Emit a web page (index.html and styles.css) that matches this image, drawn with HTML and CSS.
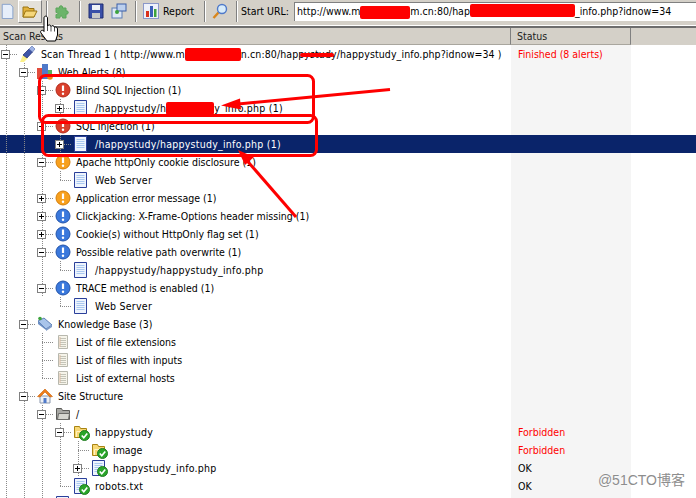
FILE: index.html
```html
<!DOCTYPE html>
<html lang="en">
<head>
  <meta charset="UTF-8" />
  <title>Acunetix Scan Results</title>
  <link rel="stylesheet" href="styles.css">
</head>
<body>
  <svg class="defs" width="0" height="0">
    <symbol id="i-minus" viewBox="0 0 9 9"><rect x=".5" y=".5" width="8" height="8" fill="#fff" stroke="#808080"/><path d="M2 4.500h5" stroke="#000"/></symbol>
    <symbol id="i-plus" viewBox="0 0 9 9"><rect x=".5" y=".5" width="8" height="8" fill="#fff" stroke="#808080"/><path d="M2 4.500h5M4.500 2v5" stroke="#000"/></symbol>
    <symbol id="i-doc" viewBox="0 0 16 16"><path d="M1.500 .5h12v15h-12z" fill="#eef4fd" stroke="#2a3f9a"/><path d="M3.500 3.500h8M3.500 5.500h8M3.500 7.500h8M3.500 9.500h8M3.500 11.500h8" stroke="#a9c8f0"/></symbol>
    <symbol id="i-leaf" viewBox="0 0 16 16"><path d="M3.500 1.500h9v13h-9z" fill="#f6f4ea" stroke="#b8b8ae"/><path d="M5 4.500h6M5 6.500h6M5 8.500h6M5 10.500h6M5 12.500h6" stroke="#c4c4b8"/><path d="M5 3v10" stroke="#d8b8a0"/></symbol>
    <symbol id="i-red" viewBox="0 0 16 16"><circle cx="8" cy="8" r="7" fill="#d9402c" stroke="#b42a1a"/><path d="M8 3.500v5.500" stroke="#fff" stroke-width="2.200"/><circle cx="8" cy="11.800" r="1.200" fill="#fff"/></symbol>
    <symbol id="i-orange" viewBox="0 0 16 16"><circle cx="8" cy="8" r="7" fill="#f7a01e" stroke="#d67f0a"/><path d="M8 3.500v5.500" stroke="#fff" stroke-width="2.200"/><circle cx="8" cy="11.800" r="1.200" fill="#fff"/></symbol>
    <symbol id="i-blue" viewBox="0 0 16 16"><circle cx="8" cy="8" r="7" fill="#3a78dc" stroke="#2354aa"/><path d="M8 3.500v5.500" stroke="#fff" stroke-width="2.200"/><circle cx="8" cy="11.800" r="1.200" fill="#fff"/></symbol>
    <symbol id="i-check" viewBox="0 0 12 12"><circle cx="6" cy="6" r="5.500" fill="#2aa52a" stroke="#1d7a1d"/><path d="M3 6l2.200 2.400L9 3.800" fill="none" stroke="#fff" stroke-width="1.800"/></symbol>
    <symbol id="i-folder" viewBox="0 0 16 16"><path d="M1.500 13.500v-11h5l1 2h6v9z" fill="#f7d774" stroke="#a98412"/><path d="M3.500 13V7.500h10" fill="none" stroke="#fff3c0"/></symbol>
    <symbol id="i-thread" viewBox="0 0 16 16"><path d="M1 16l3-7 5 3-4 4z" fill="#fbf08a"/><path d="M4 9l6-6 3.500 3-5.500 6z" fill="#3f56a8" stroke="#1f2c70" stroke-width=".7"/><path d="M10 3l3-3 3 3-2.500 3z" fill="#9fb4e6" stroke="#4f66a8" stroke-width=".6"/></symbol>
    <symbol id="i-alerts" viewBox="0 0 16 16"><rect x="0" y="4" width="5" height="11" fill="#e14b3c"/><rect x="5" y="0" width="6" height="15" fill="#4f79c9"/><rect x="11" y="6" width="4" height="9" fill="#5fb058"/><circle cx="13" cy="13" r="2.800" fill="#ef8a12"/></symbol>
    <symbol id="i-kb" viewBox="0 0 16 16"><path d="M1 5l6-3 8 7-6 4z" fill="#a9c4ea" stroke="#5d7fb5"/><path d="M1 5v3l8 6v-1z" fill="#6c8fc4"/><path d="M9 13l6-4v2l-6 4z" fill="#7f9cc9"/><circle cx="3" cy="2.500" r="1.800" fill="#3da33d"/></symbol>
    <symbol id="i-home" viewBox="0 0 16 16"><path d="M3 8h10v7H3z" fill="#eef1f6" stroke="#8a97ad"/><path d="M8 1L.5 8.500 3 9l5-5 5 5 2.500-.5z" fill="#ef7d1a" stroke="#c55f0a" stroke-width=".6"/><rect x="6.500" y="10" width="3" height="5" fill="#4f79c9"/></symbol>
    <symbol id="i-grey" viewBox="0 0 16 16"><path d="M1.500 13.500v-11h5l1 2h7v9z" fill="#a8a8a4" stroke="#5b5b58"/><path d="M2.500 13.500l1-6h11l-1 6z" fill="#d6d6d0" stroke="#6b6b68"/></symbol>
  </svg>

  <header class="toolbar">
    <svg class="tool" viewBox="0 0 16 18"><path d="M1.500 1.500h9l3 3v13h-12z" fill="#e6eefa" stroke="#7f9cc9"/></svg>
    <span class="tool-btn">
      <svg class="tool" viewBox="0 0 16 16"><path d="M1 14V4h5l1 1.500h5V14z" fill="#e3b23c" stroke="#9a7412"/><path d="M1 14l2.500-6H15l-3 6z" fill="#f6d77a" stroke="#9a7412"/></svg>
    </span>
    <i class="sep sep-a"></i>
    <svg class="tool tool-puzzle" viewBox="0 0 16 16"><path d="M1 5h3.500c-1-3 4-3 3 0H11v3c3-1 3 4 0 3v4H7.500c1-2.500-3.500-2.500-2.500 0H1v-3.500c2.500 1 2.500-3 0-2z" fill="#6cb46a" stroke="#5aa65a"/></svg>
    <i class="sep sep-b"></i>
    <svg class="tool tool-save" viewBox="0 0 16 16"><path d="M1 1h14v14H1z" fill="#3a4fa8" stroke="#1f2c70"/><rect x="4" y="2" width="8" height="5" fill="#eef1f6"/><rect x="4" y="10" width="8" height="5" fill="#c8c8c8"/></svg>
    <svg class="tool tool-net" viewBox="0 0 16 16"><rect x="1" y="5" width="10" height="10" fill="#dfe8f5" stroke="#5d7fb5"/><rect x="6" y="1" width="9" height="7" fill="#bcd0ee" stroke="#3a5fa8"/><circle cx="6" cy="9" r="2" fill="#3da33d"/></svg>
    <i class="sep sep-c"></i>
    <span class="tool-report">
      <svg class="tool" viewBox="0 0 16 16"><rect x=".5" y=".5" width="15" height="15" fill="#eef1fa" stroke="#8a97c9"/><rect x="3" y="8" width="3" height="6" fill="#d9301c"/><rect x="7" y="3" width="3" height="11" fill="#3a5fb8"/><rect x="11" y="6" width="2.500" height="8" fill="#3da33d"/></svg>
      Report
    </span>
    <i class="sep sep-d"></i>
    <svg class="tool tool-find" viewBox="0 0 16 16"><path d="M6.500 9.500L1.500 15" stroke="#d9861c" stroke-width="2.400"/><circle cx="10" cy="6" r="4.500" fill="#d8ecfa" stroke="#4f79c9" stroke-width="1.400"/></svg>
    <i class="sep sep-e"></i>
    <label class="url-label">Start URL:</label>
    <div class="url-box">http://www.m<span class="redact redact-a"></span>m.cn:80/hap<span class="redact redact-b"></span>_info.php?idnow=34</div>
  </header>

  <div class="col-head">
    <div class="col col-name">Scan Results</div>
    <div class="col col-status">Status</div>
  </div>

  <main class="tree">
    <div class="row"><div class="name wide thread"><span class="c knob"><svg><use href="#i-minus"/></svg></span><svg class="ico"><use href="#i-thread"/></svg>Scan Thread 1 ( http://www.m<span class="redact redact-c"></span>n.cn:80/happystudy/happystudy_info.php?idnow=34 )</div><div class="status err">Finished (8 alerts)</div></div>

    <div class="row"><div class="name"><span class="c line"></span><span class="c knob"><svg><use href="#i-minus"/></svg></span><svg class="ico"><use href="#i-alerts"/></svg>Web Alerts (8)</div><div class="status"></div></div>
    <div class="row"><div class="name"><span class="c line"></span><span class="c line"></span><span class="c knob"><svg><use href="#i-minus"/></svg></span><svg class="ico"><use href="#i-red"/></svg>Blind SQL Injection (1)</div><div class="status"></div></div>
    <div class="row"><div class="name wide"><span class="c line"></span><span class="c line"></span><span class="c line"></span><span class="c knob"><svg><use href="#i-plus"/></svg></span><svg class="ico"><use href="#i-doc"/></svg>/happystudy/h<span class="redact redact-d"></span>y_info.php (1)</div><div class="status"></div></div>
    <div class="row"><div class="name"><span class="c line"></span><span class="c line"></span><span class="c knob"><svg><use href="#i-minus"/></svg></span><svg class="ico"><use href="#i-red"/></svg>SQL Injection (1)</div><div class="status"></div></div>
    <div class="row selected"><div class="name wide"><span class="c line"></span><span class="c line"></span><span class="c line"></span><span class="c knob"><svg><use href="#i-plus"/></svg></span><svg class="ico"><use href="#i-doc"/></svg>/happystudy/happystudy_info.php (1)</div><div class="status"></div></div>
    <div class="row"><div class="name"><span class="c line"></span><span class="c line"></span><span class="c knob"><svg><use href="#i-minus"/></svg></span><svg class="ico"><use href="#i-orange"/></svg>Apache httpOnly cookie disclosure (1)</div><div class="status"></div></div>
    <div class="row"><div class="name wide"><span class="c line"></span><span class="c line"></span><span class="c line"></span><span class="c ell"></span><svg class="ico"><use href="#i-doc"/></svg>Web Server</div><div class="status"></div></div>
    <div class="row"><div class="name"><span class="c line"></span><span class="c line"></span><span class="c knob"><svg><use href="#i-plus"/></svg></span><svg class="ico"><use href="#i-orange"/></svg>Application error message (1)</div><div class="status"></div></div>
    <div class="row"><div class="name"><span class="c line"></span><span class="c line"></span><span class="c knob"><svg><use href="#i-plus"/></svg></span><svg class="ico"><use href="#i-blue"/></svg>Clickjacking: X-Frame-Options header missing (1)</div><div class="status"></div></div>
    <div class="row"><div class="name"><span class="c line"></span><span class="c line"></span><span class="c knob"><svg><use href="#i-plus"/></svg></span><svg class="ico"><use href="#i-blue"/></svg>Cookie(s) without HttpOnly flag set (1)</div><div class="status"></div></div>
    <div class="row"><div class="name"><span class="c line"></span><span class="c line"></span><span class="c knob"><svg><use href="#i-minus"/></svg></span><svg class="ico"><use href="#i-blue"/></svg>Possible relative path overwrite (1)</div><div class="status"></div></div>
    <div class="row"><div class="name wide"><span class="c line"></span><span class="c line"></span><span class="c line"></span><span class="c ell"></span><svg class="ico"><use href="#i-doc"/></svg>/happystudy/happystudy_info.php</div><div class="status"></div></div>
    <div class="row"><div class="name"><span class="c line"></span><span class="c line"></span><span class="c knob"><svg><use href="#i-minus"/></svg></span><svg class="ico"><use href="#i-blue"/></svg>TRACE method is enabled (1)</div><div class="status"></div></div>
    <div class="row"><div class="name wide"><span class="c line"></span><span class="c line"></span><span class="c blank"></span><span class="c ell"></span><svg class="ico"><use href="#i-doc"/></svg>Web Server</div><div class="status"></div></div>

    <div class="row"><div class="name"><span class="c line"></span><span class="c knob"><svg><use href="#i-minus"/></svg></span><svg class="ico"><use href="#i-kb"/></svg>Knowledge Base (3)</div><div class="status"></div></div>
    <div class="row"><div class="name"><span class="c line"></span><span class="c line"></span><span class="c tee"></span><svg class="ico"><use href="#i-leaf"/></svg>List of file extensions</div><div class="status"></div></div>
    <div class="row"><div class="name"><span class="c line"></span><span class="c line"></span><span class="c tee"></span><svg class="ico"><use href="#i-leaf"/></svg>List of files with inputs</div><div class="status"></div></div>
    <div class="row"><div class="name"><span class="c line"></span><span class="c line"></span><span class="c ell"></span><svg class="ico"><use href="#i-leaf"/></svg>List of external hosts</div><div class="status"></div></div>

    <div class="row"><div class="name"><span class="c line"></span><span class="c knob"><svg><use href="#i-minus"/></svg></span><svg class="ico"><use href="#i-home"/></svg>Site Structure</div><div class="status"></div></div>
    <div class="row"><div class="name"><span class="c line"></span><span class="c line"></span><span class="c knob"><svg><use href="#i-minus"/></svg></span><svg class="ico"><use href="#i-grey"/></svg>/</div><div class="status"></div></div>
    <div class="row"><div class="name wide"><span class="c line"></span><span class="c line"></span><span class="c line"></span><span class="c knob"><svg><use href="#i-minus"/></svg></span><span class="ico-wrap"><svg class="ico"><use href="#i-folder"/></svg><svg class="tick"><use href="#i-check"/></svg></span>happystudy</div><div class="status err">Forbidden</div></div>
    <div class="row"><div class="name"><span class="c line"></span><span class="c line"></span><span class="c line"></span><span class="c line"></span><span class="c tee"></span><span class="ico-wrap"><svg class="ico"><use href="#i-folder"/></svg><svg class="tick"><use href="#i-check"/></svg></span>image</div><div class="status err">Forbidden</div></div>
    <div class="row"><div class="name wide"><span class="c line"></span><span class="c line"></span><span class="c line"></span><span class="c line"></span><span class="c knob"><svg><use href="#i-plus"/></svg></span><span class="ico-wrap"><svg class="ico"><use href="#i-doc"/></svg><svg class="tick"><use href="#i-check"/></svg></span>happystudy_info.php</div><div class="status">OK</div></div>
    <div class="row"><div class="name wide"><span class="c line"></span><span class="c line"></span><span class="c line"></span><span class="c ell"></span><span class="ico-wrap"><svg class="ico"><use href="#i-doc"/></svg><svg class="tick"><use href="#i-check"/></svg></span>robots.txt</div><div class="status">OK</div></div>
    <div class="row"><div class="name"><span class="c line"></span><span class="c line"></span><span class="c tee"></span><svg class="ico"><use href="#i-doc"/></svg></div><div class="status"></div></div>
  </main>

  <!-- red marks drawn over the screenshot -->
  <svg class="marks" width="696" height="498" viewBox="0 0 696 498">
    <rect x="300" y="53" width="34" height="4" rx="2" fill="#fe0000"/>
    <g fill="none" stroke="#fe0000" stroke-width="3">
      <rect x="39.500" y="75.500" width="274" height="47" rx="6"/>
      <rect x="42.500" y="115.500" width="274" height="40" rx="6"/>
      <path d="M390 89.500L228 105"/>
      <path d="M296 217L243 156"/>
    </g>
    <g fill="#fe0000">
      <path d="M221 105.500l19-7 1 11z"/>
      <path d="M238 150l16 7-9 8z"/>
    </g>
    <!-- hand cursor -->
    <path d="M44 18c0-2.500 3.500-2.500 3.500 0v8c.5-1.500 3.500-1.500 3.500 .5 .5-1.500 3.500-1 3.500 1 .5-1 3-.5 3 1.500v6l-2 6h-8.500l-6-8c-1.500-2.500 1.500-3.500 3-2l0 .5z" fill="#fff" stroke="#000"/>
    <path d="M47.500 26v5M51 26.500v5M54.500 27.500v4" fill="none" stroke="#000" stroke-width=".7"/>
  </svg>

  <div class="watermark">@51CTO博客</div>
</body>
</html>
```

FILE: styles.css
```css
* {
  box-sizing: border-box;
}

html, body {
  margin: 0;
  height: 498px;
  overflow: hidden;
}

body {
  position: relative;
  font-family: "DejaVu Sans Condensed", "DejaVu Sans", sans-serif;
  font-size: 10.5px;
  color: #000;
  background-color: #fff;
}

.defs {
  display: block;
  height: 0;
}

/* Toolbar */
.toolbar {
  display: flex;
  align-items: center;
  height: 28px;
  padding: 0 0 4px;
  background-color: #d4d0c8;
  border-bottom: 2px solid #6d6d6d;
  box-shadow: inset 0 -1px 0 #fff;
}

.tool {
  display: block;
  width: 16px;
  height: 16px;
  flex: none;
}

.tool-btn {
  display: flex;
  align-items: center;
  justify-content: center;
  width: 24px;
  height: 23px;
  margin-left: 2px;
  border: 1px solid #fff;
  border-right-color: #808080;
  border-bottom-color: #808080;
  background-color: #e4e1da;
}

.tool-puzzle { margin-left: 7px; }
.tool-save { margin-left: 7px; }
.tool-net { margin-left: 7px; }
.tool-find { margin-left: 6px; }

.tool-report {
  display: flex;
  align-items: center;
  gap: 4px;
  width: 53px;
  margin-left: 6px;
  white-space: nowrap;
}

.sep {
  flex: none;
  width: 2px;
  height: 21px;
  border-left: 1px solid #808080;
  border-right: 1px solid #fff;
}

.sep-a { margin-left: 4px; }
.sep-b { margin-left: 8px; }
.sep-c { margin-left: 8px; }
.sep-d { margin-left: 8px; }
.sep-e { margin-left: 8px; }

.url-label {
  width: 53px;
  margin-left: 3px;
  white-space: nowrap;
}

.url-box {
  display: flex;
  align-items: flex-start;
  flex: 1;
  height: 19px;
  padding: 2px 0 0 2px;
  overflow: hidden;
  white-space: pre;
  background-color: #fff;
  border-top: 1px solid #808080;
  border-left: 1px solid #808080;
}

/* Redacted bits of the urls */
.redact {
  display: block;
  flex: none;
  height: 13px;
  border-radius: 2px;
  background-color: #fe0000;
}

.redact-a { width: 50px; margin-top: 1px; }
.redact-b { width: 105px; margin-top: -1px; }
.redact-c { width: 56px; }
.redact-d { width: 48px; }

/* Column headers */
.col-head {
  display: flex;
  height: 17px;
  background-color: #d4d0c8;
}

.col {
  padding: 2px 0 0 3px;
  border-right: 1px solid #808080;
  border-bottom: 1px solid #a9a69e;
  color: #222;
}

.col-name { width: 511px; }
.col-status { width: 120px; padding-left: 6px; }

/* Tree */
.row {
  display: flex;
  height: 18px;
}

.name {
  display: flex;
  align-items: center;
  width: 511px;
  flex: none;
  white-space: pre;
}

.wide {
  letter-spacing: .25px;
}

.wide > .ico {
  margin-right: 6px;
}

.thread {
  letter-spacing: .1px;
}

.status {
  width: 120px;
  flex: none;
  padding: 3px 0 0 7px;
  background-color: #f5f5f5;
}

.err {
  color: #f00;
}

.selected {
  background-color: #0a246a;
  color: #fff;
}

.selected .status {
  background-color: #0a246a;
}

/* one 18px indent column of the tree, guide line at x=6 */
.c {
  display: block;
  flex: none;
  width: 18px;
  height: 18px;
  background-repeat: no-repeat;
}

.line {
  background-image: repeating-linear-gradient(#8a8a8a 0 1px, transparent 1px 2px);
  background-size: 1px 100%;
  background-position: 6px 0;
}

.tee,
.ell,
.knob {
  background-image:
    repeating-linear-gradient(#8a8a8a 0 1px, transparent 1px 2px),
    repeating-linear-gradient(90deg, #8a8a8a 0 1px, transparent 1px 2px);
  background-size: 1px 100%, 12px 1px;
  background-position: 6px 0, 6px 9px;
}

.ell {
  background-size: 1px 9px, 12px 1px;
}

.knob {
  padding: 5px 0 0 1px;
}

.knob svg {
  display: block;
  width: 9px;
  height: 9px;
}

.ico {
  display: block;
  flex: none;
  width: 16px;
  height: 16px;
  margin: 0 5px 0 1px;
}

.ico-wrap {
  position: relative;
  display: block;
  flex: none;
  width: 23px;
  height: 16px;
}

.tick {
  position: absolute;
  left: 7px;
  top: 6px;
  width: 11px;
  height: 11px;
}

/* Overlays */
.marks {
  position: absolute;
  left: 0;
  top: 0;
}

.watermark {
  position: absolute;
  right: 11px;
  bottom: 9px;
  font-family: "Liberation Sans", "Noto Sans CJK SC", sans-serif;
  font-size: 14px;
  color: #8d8d8d;
  text-shadow: 0 0 2px #fff;
}
```
